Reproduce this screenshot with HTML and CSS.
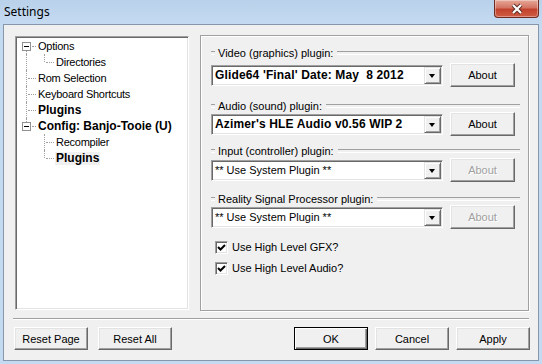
FILE: index.html
```html
<!DOCTYPE html>
<html lang="en">

<head>
  <meta charset="UTF-8">
  <title>Settings</title>
  <link rel="stylesheet" href="styles.css">
</head>

<body>
  <div class="window">
    <div class="titlebar">
      <span class="title">Settings</span>
      <button type="button" class="close">
        <svg width="14" height="12" viewBox="0 0 14 12">
          <path d="M3 2 L11 10 M11 2 L3 10" stroke="#5a2a22" stroke-width="4" />
          <path d="M3 2 L11 10 M11 2 L3 10" stroke="#fff" stroke-width="2.2" />
        </svg>
      </button>
    </div>

    <div class="client">
      <div class="main">
        <div class="tree">
          <div class="tree-row"><span class="tl tl-first"><i class="expander"></i></span><span class="node">Options</span></div>
          <div class="tree-row"><span class="tl tl-pipe"></span><span class="tl tl-end"></span><span class="node">Directories</span></div>
          <div class="tree-row"><span class="tl tl-tee"></span><span class="node">Rom Selection</span></div>
          <div class="tree-row"><span class="tl tl-tee"></span><span class="node">Keyboard Shortcuts</span></div>
          <div class="tree-row"><span class="tl tl-tee"></span><span class="node strong">Plugins</span></div>
          <div class="tree-row"><span class="tl tl-last"><i class="expander"></i></span><span class="node strong">Config: Banjo-Tooie (U)</span></div>
          <div class="tree-row"><span class="tl"></span><span class="tl tl-tee"></span><span class="node">Recompiler</span></div>
          <div class="tree-row"><span class="tl"></span><span class="tl tl-end"></span><span class="node strong selected">Plugins</span></div>
        </div>

        <div class="panel">
          <div class="group video">
            <div class="legend"><span>Video (graphics) plugin:</span></div>
            <div class="plugin-row">
              <div class="combo"><span class="value strong">Glide64 'Final' Date: May  8 2012</span><span class="drop"></span></div>
              <button type="button" class="btn about">About</button>
            </div>
          </div>
          <div class="group audio">
            <div class="legend"><span>Audio (sound) plugin:</span></div>
            <div class="plugin-row">
              <div class="combo"><span class="value strong">Azimer's HLE Audio v0.56 WIP 2</span><span class="drop"></span></div>
              <button type="button" class="btn about">About</button>
            </div>
          </div>
          <div class="group input">
            <div class="legend"><span>Input (controller) plugin:</span></div>
            <div class="plugin-row">
              <div class="combo"><span class="value">** Use System Plugin **</span><span class="drop"></span></div>
              <button type="button" class="btn about" disabled>About</button>
            </div>
          </div>
          <div class="group rsp">
            <div class="legend"><span>Reality Signal Processor plugin:</span></div>
            <div class="plugin-row">
              <div class="combo"><span class="value">** Use System Plugin **</span><span class="drop"></span></div>
              <button type="button" class="btn about" disabled>About</button>
            </div>
          </div>

          <label class="check first">
            <span class="box"><svg width="9" height="9" viewBox="0 0 9 9"><path d="M1 4 L3.5 6.5 L8 2" fill="none" stroke="#000" stroke-width="2" /></svg></span>
            Use High Level GFX?
          </label>
          <label class="check">
            <span class="box"><svg width="9" height="9" viewBox="0 0 9 9"><path d="M1 4 L3.5 6.5 L8 2" fill="none" stroke="#000" stroke-width="2" /></svg></span>
            Use High Level Audio?
          </label>
        </div>
      </div>

      <div class="separator"></div>

      <div class="footer">
        <button type="button" class="btn">Reset Page</button>
        <button type="button" class="btn">Reset All</button>
        <span class="spacer"></span>
        <button type="button" class="btn default">OK</button>
        <button type="button" class="btn">Cancel</button>
        <button type="button" class="btn">Apply</button>
      </div>
    </div>
  </div>
</body>

</html>
```

FILE: styles.css
```css
* {
  box-sizing: border-box;
}

body {
  margin: 0;
  font-family: "Liberation Sans", Arial, sans-serif;
  font-size: 11px;
  color: #000;
}

.window {
  width: 542px;
  height: 364px;
  display: flex;
  flex-direction: column;
  padding: 0 3px 3px 3px;
  background: linear-gradient(#b9d1ea, #c4daf1 24px, #c4daf1);
}

.titlebar {
  height: 24px;
  display: flex;
  justify-content: space-between;
  align-items: flex-start;
}

.title {
  margin: 3px 0 0 1px;
  font-family: "Noto Sans", sans-serif;
  font-size: 12px;
  line-height: 17px;
}

.close {
  width: 45px;
  height: 18px;
  padding: 0;
  display: flex;
  align-items: center;
  justify-content: center;
  border: 1px solid #6e2b22;
  border-top: none;
  border-radius: 0 0 4px 4px;
  background: linear-gradient(#e6a898, #d47563 45%, #c2432d 55%, #cf5c43);
  box-shadow: inset 0 0 0 1px rgba(255, 255, 255, 0.35);
}

.client {
  flex: 1;
  display: flex;
  flex-direction: column;
  background: #f0f0f0;
  border: 1px solid #8797ab;
}

.main {
  display: flex;
  align-items: flex-start;
  gap: 11px;
  padding: 10px 0 0 11px;
}

/* tree view */

.tree {
  width: 174px;
  height: 274px;
  margin-top: 1px;
  padding: 1px 0 0 2px;
  background: #fff;
  border: 1px solid;
  border-color: #a0a0a0 #fff #fff #a0a0a0;
  box-shadow: inset 1px 1px #696969, inset -1px -1px #e3e3e3;
}

.tree-row {
  display: flex;
  height: 16px;
}

.tl {
  position: relative;
  width: 18px;
  flex: none;
}

.tl-pipe::before,
.tl-tee::before,
.tl-end::before,
.tl-first::before,
.tl-last::before {
  content: "";
  position: absolute;
  left: 8px;
  top: 0;
  bottom: 0;
  border-left: 1px dotted #a0a0a0;
}

.tl-end::before {
  bottom: 8px;
}

.tl-first::before {
  top: 13px;
}

.tl-last::before {
  bottom: 12px;
}

.tl-tee::after,
.tl-end::after,
.tl-first::after,
.tl-last::after {
  content: "";
  position: absolute;
  left: 10px;
  right: 0;
  top: 8px;
  border-top: 1px dotted #a0a0a0;
}

.tl-first::after,
.tl-last::after {
  left: 14px;
}

.expander {
  position: absolute;
  left: 4px;
  top: 4px;
  width: 9px;
  height: 9px;
  border: 1px solid #919191;
  background: #fff;
  z-index: 1;
}

.expander::after {
  content: "";
  position: absolute;
  left: 1px;
  top: 3px;
  width: 5px;
  height: 1px;
  background: #000;
}

.node {
  align-self: center;
  margin-left: 1px;
  padding: 0 1px;
  line-height: 13px;
  letter-spacing: -0.25px;
  white-space: nowrap;
}

.strong {
  font-size: 12px;
  font-weight: bold;
  letter-spacing: 0;
}

.node.selected {
  background: #f0f0f0;
}

/* plugin panel */

.panel {
  width: 329px;
  height: 276px;
  padding: 0 8px 0 10px;
  border: 1px solid #a0a0a0;
  box-shadow: inset 1px 1px #fff, 1px 1px #fff;
}

.legend {
  display: flex;
  align-items: center;
  height: 12px;
}

.legend::before,
.legend::after {
  content: "";
  height: 2px;
  border-top: 1px solid #a0a0a0;
  border-bottom: 1px solid #fff;
}

.legend::before {
  width: 4px;
}

.legend::after {
  flex: 1;
}

.legend span {
  padding: 0 4px 0 3px;
  white-space: nowrap;
}

.video {
  margin-top: 11px;
}

.video .legend {
  margin-bottom: 4px;
}

.audio {
  margin-top: 13px;
}

.input {
  margin-top: 9px;
}

.input .legend {
  margin-bottom: 1px;
}

.rsp {
  margin-top: 11px;
}

.plugin-row {
  display: flex;
  align-items: center;
  justify-content: space-between;
  height: 24px;
  margin-right: 5px;
}

.combo {
  width: 232px;
  height: 21px;
  display: flex;
  align-items: center;
  padding: 1px;
  background: #fff;
  border: 1px solid;
  border-color: #a0a0a0 #fff #fff #a0a0a0;
  box-shadow: inset 1px 1px #696969, inset -1px -1px #e3e3e3;
}

.combo .value {
  flex: 1;
  padding-left: 2px;
  white-space: pre;
  overflow: hidden;
}

.combo .value.strong {
  letter-spacing: 0.15px;
}

.drop {
  position: relative;
  width: 17px;
  height: 17px;
  flex: none;
  background: #f0f0f0;
  border: 1px solid;
  border-color: #e3e3e3 #696969 #696969 #e3e3e3;
  box-shadow: inset 1px 1px #fff, inset -1px -1px #a0a0a0;
}

.drop::after {
  content: "";
  position: absolute;
  left: 4px;
  top: 6px;
  border-style: solid;
  border-width: 4px 3.5px 0 3.5px;
  border-color: #000 transparent transparent transparent;
}

.check {
  display: flex;
  align-items: center;
  gap: 4px;
  height: 16px;
  margin-top: 5px;
  padding-left: 4px;
}

.check.first {
  margin-top: 10px;
}

.check .box {
  width: 13px;
  height: 13px;
  display: flex;
  align-items: center;
  justify-content: center;
  background: #fff;
  border: 1px solid;
  border-color: #a0a0a0 #fff #fff #a0a0a0;
  box-shadow: inset 1px 1px #696969, inset -1px -1px #e3e3e3;
}

/* buttons */

.btn {
  height: 23px;
  width: 74px;
  padding: 0;
  font-family: "Liberation Sans", Arial, sans-serif;
  font-size: 11px;
  color: #000;
  background: #f0f0f0;
  border: 1px solid;
  border-color: #fff #696969 #696969 #fff;
  box-shadow: inset -1px -1px #a0a0a0, inset 1px 1px #e3e3e3;
}

.btn.about {
  width: 65px;
  height: 24px;
}

.btn:disabled {
  color: #a0a0a0;
  text-shadow: 1px 1px #fff;
}

.btn.default {
  border-color: #000;
  box-shadow: inset 1px 1px #fff, inset -1px -1px #696969, inset -2px -2px #a0a0a0;
}

.separator {
  margin: 7px 9px 0 9px;
  height: 2px;
  border-top: 1px solid #a0a0a0;
  border-bottom: 1px solid #fff;
}

.footer {
  display: flex;
  gap: 7px;
  margin-top: 7px;
  padding: 0 8px 0 10px;
}

.footer .btn:nth-child(2) {
  margin-left: 3px;
}

.spacer {
  flex: 1;
}
```
